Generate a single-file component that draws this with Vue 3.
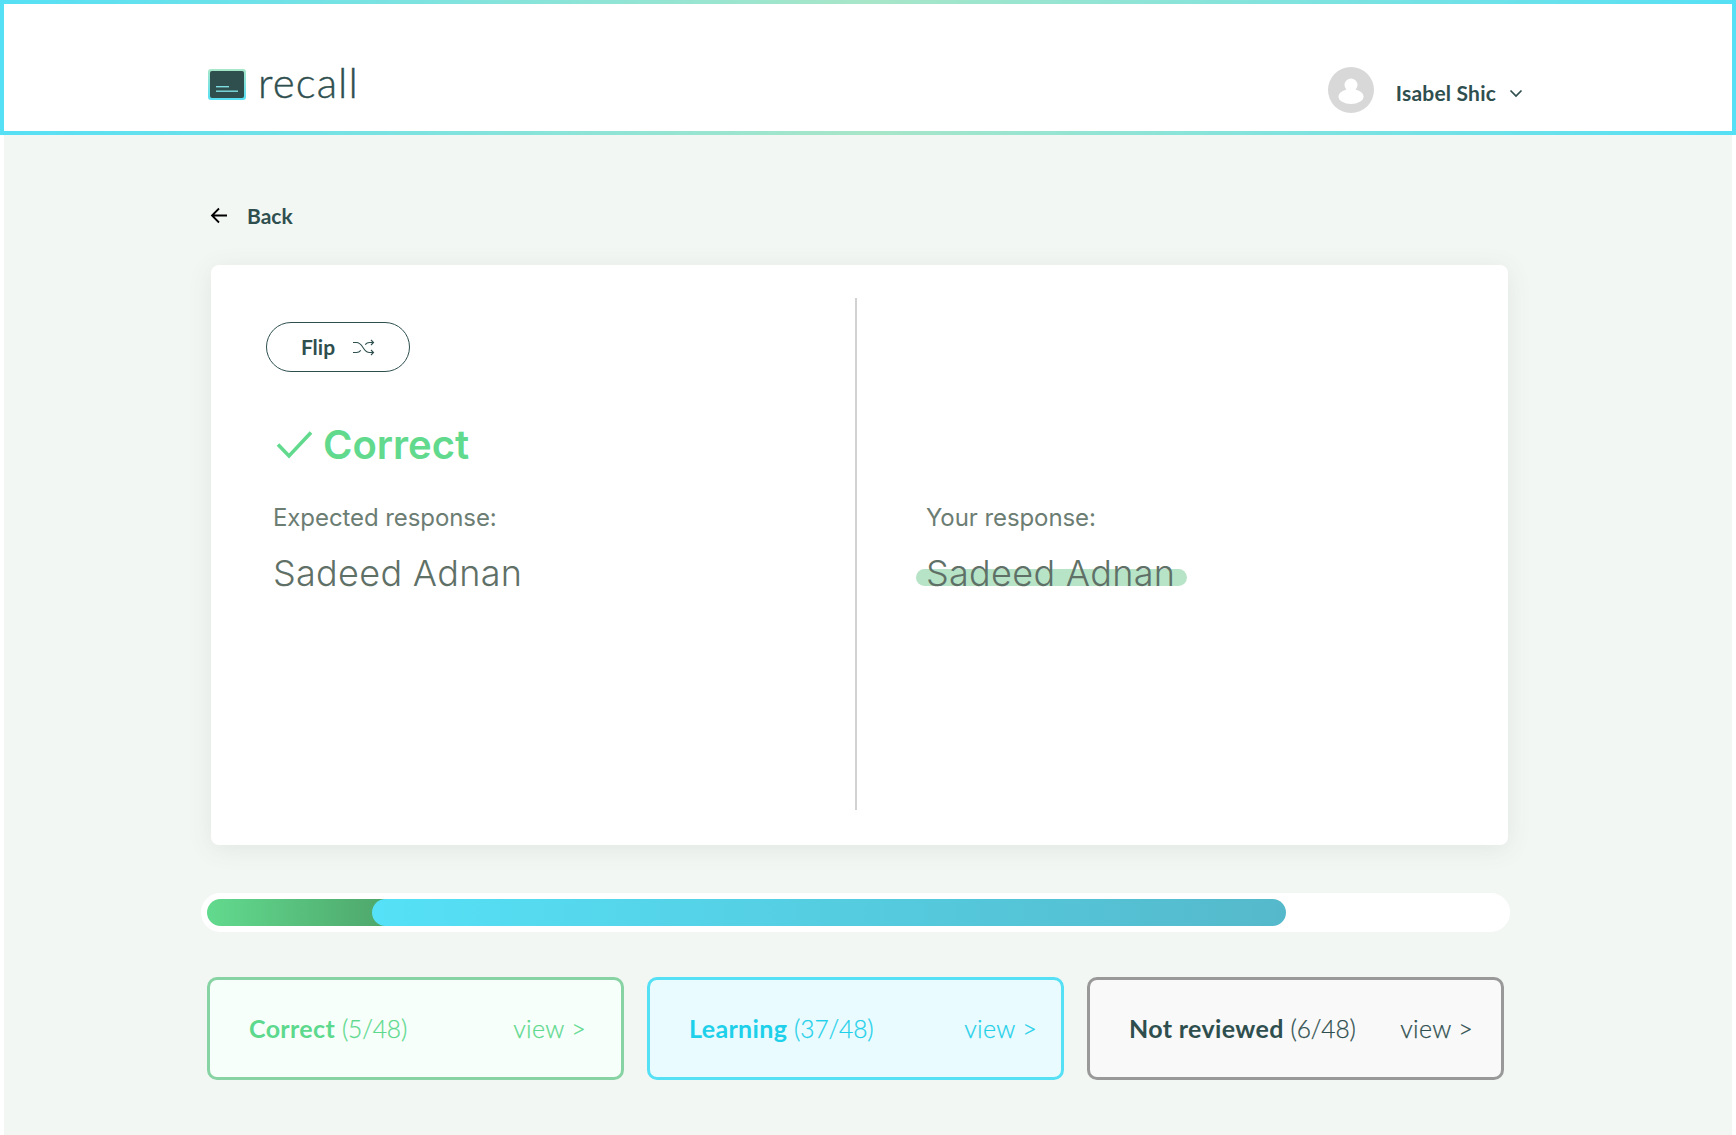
<script setup>
const stats = [
  { key: 'correct', label: 'Correct', count: '(5/48)' },
  { key: 'learning', label: 'Learning', count: '(37/48)' },
  { key: 'none', label: 'Not reviewed', count: '(6/48)' },
]
</script>

<template>
  <div class="page">
    <header class="header">
      <div class="brand">
        <svg class="logo" width="38" height="31" viewBox="0 0 38 31">
          <defs>
            <linearGradient id="lg" x1="0" y1="0" x2="0" y2="1">
              <stop offset="0" stop-color="#a8e6c8" />
              <stop offset="1" stop-color="#56e0f5" />
            </linearGradient>
          </defs>
          <rect x="0" y="0" width="38" height="31" rx="3" fill="url(#lg)" />
          <rect x="2" y="2" width="34" height="27" rx="2" fill="#2f4f4f" />
          <rect x="8" y="17" width="13" height="1.4" fill="#7fdde0" />
          <rect x="8" y="21.5" width="22" height="1.4" fill="#7fdde0" />
        </svg>
        <span class="brand-name">recall</span>
      </div>
      <div class="user">
        <svg class="avatar" width="46" height="46" viewBox="0 0 46 46">
          <circle cx="23" cy="23" r="23" fill="#d8d8d8" />
          <circle cx="23" cy="18" r="6.5" fill="#fff" />
          <ellipse cx="23" cy="29.5" rx="12.5" ry="7.5" fill="#fff" />
        </svg>
        <span class="user-name">Isabel Shic</span>
        <svg class="chev" width="14" height="9" viewBox="0 0 14 9">
          <path d="M1.500 1.500 7 7l5.500-5.500" fill="none" stroke="#2f4f4f" stroke-width="1.700" />
        </svg>
      </div>
    </header>

    <main class="main">
      <div class="back">
        <svg width="18" height="17" viewBox="0 0 18 17">
          <path d="M17 8.500H2M9 1.500 2 8.500l7 7" fill="none" stroke="#000" stroke-width="1.800" />
        </svg>
        <span>Back</span>
      </div>

      <section class="card">
        <div class="col col-left">
          <button class="flip">
            <span>Flip</span>
            <svg width="23" height="17" viewBox="0 0 23 17">
              <path d="M1 3.500h3.500c3.500 0 4.500 2 6.500 5s3 5 6.500 5H21M1 13.500h3.500c2 0 3.200-.8 4.300-2.100M13.200 5.600c1.100-1.300 2.300-2.100 4.300-2.100H21M19 1l2.500 2.500L19 6M19 11l2.500 2.500L19 16" fill="none" stroke="#2f4f4f" stroke-width="1.100" />
            </svg>
          </button>
          <div class="status">
            <svg width="37" height="29" viewBox="0 0 37 29">
              <path d="M2 14.500 13 26 35 2.500" fill="none" stroke="#62da8e" stroke-width="3.600" />
            </svg>
            <span>Correct</span>
          </div>
          <div class="label">Expected response:</div>
          <div class="answer">Sadeed Adnan</div>
        </div>
        <div class="col col-right">
          <div class="label">Your response:</div>
          <div class="answer highlighted"><span class="mark"></span><span class="answer-text">Sadeed Adnan</span></div>
        </div>
      </section>

      <div class="track">
        <div class="bar-green"></div>
        <div class="bar-blue"></div>
      </div>

      <div class="stats">
        <div v-for="s in stats" :key="s.key" class="stat" :class="s.key">
          <span><b>{{ s.label }}</b> <span class="count">{{ s.count }}</span></span>
          <span class="view">view &gt;</span>
        </div>
      </div>
    </main>
  </div>
</template>

<style>
html, body { margin: 0; background: #fff; }
</style>

<style scoped>
.page {
  width: 1736px;
  height: 1135px;
  overflow: hidden;
  background: #fff;
  font-family: Lato, "Liberation Sans", sans-serif;
  color: #2f4f4f;
}
.header {
  box-sizing: border-box;
  height: 135px;
  border: 4px solid;
  border-image: linear-gradient(90deg, #56e0f5 0%, #a8e6c8 50%, #56e0f5 100%) 1;
  background: #fff;
  display: flex;
  justify-content: space-between;
  padding: 0 204px;
}
.brand { display: flex; align-items: center; margin-top: 28px; height: 100px; }
.logo { display: block; margin-top: 4px; }
.brand-name {
  margin-left: 12px;
  font-size: 42px;
  font-weight: 300;
  letter-spacing: 1.1px;
  -webkit-text-stroke: 0.4px #2f4f4f;
  color: #2f4f4f;
}
.user { display: flex; align-items: center; margin-top: 63px; height: 46px; margin-right: 5px; }
.user-name { margin-left: 22px; margin-top: 4px; font-size: 21px; font-weight: 700; letter-spacing: 0.2px; }
.chev { margin-left: 13px; margin-top: 7px; }

.main {
  margin: 0 4px;
  height: 1000px;
  background: #f3f7f4;
  padding: 68px 0 0 203px;
  box-sizing: border-box;
}
.back { display: flex; align-items: center; height: 24px; margin-left: 3px; font-size: 21px; font-weight: 700; }
.back span { margin-left: 19px; }

.card {
  box-sizing: border-box;
  width: 1297px;
  height: 580px;
  margin: 38px 0 0 4px;
  background: #fff;
  border-radius: 8px;
  box-shadow: 0 4px 24px rgba(60, 90, 75, 0.1);
  display: flex;
  padding: 33px 0;
}
.col { box-sizing: border-box; height: 512px; }
.col-left { width: 646px; border-right: 2px solid #d2d2d2; padding: 24px 0 0 55px; }
.col-right { padding: 205px 0 0 69px; }
.flip {
  box-sizing: border-box;
  width: 144px;
  height: 50px;
  border: 1px solid #2f4f4f;
  border-radius: 25px;
  background: #fff;
  color: #2f4f4f;
  font-family: inherit;
  font-size: 21px;
  font-weight: 700;
  display: flex;
  align-items: center;
  justify-content: center;
  gap: 17px;
  padding: 0 0 2px;
}
.flip svg { margin-top: 3px; }
.status {
  display: flex;
  align-items: center;
  gap: 10px;
  margin: 47px 0 0 10px;
  height: 50px;
  font-family: Inter, sans-serif;
  font-size: 40px;
  font-weight: 600;
  color: #62da8e;
}
.label {
  font-family: Inter, sans-serif;
  font-size: 24px;
  line-height: 30px;
  letter-spacing: -0.08px;
  color: #6c7d73;
  margin: 34px 0 0 7px;
}
.col-right .label { margin: 0; }
.answer {
  font-family: Inter, sans-serif;
  font-size: 36px;
  font-weight: 300;
  line-height: 44px;
  color: #5f7067;
  margin: 18px 0 0 7px;
  letter-spacing: 0.3px;
}
.highlighted { position: relative; margin-left: 0; }
.mark {
  position: absolute;
  left: -10px;
  top: 18px;
  width: 271px;
  height: 17px;
  border-radius: 9px;
  background: #b7e4c7;
}
.answer-text { position: relative; }

.track {
  box-sizing: border-box;
  width: 1309px;
  height: 39px;
  margin: 48px 0 0 -6px;
  padding: 6px;
  border-radius: 20px;
  background: #fff;
  display: flex;
}
.bar-green {
  width: 190px;
  height: 27px;
  border-radius: 14px 0 0 14px;
  background: linear-gradient(90deg, #62da8e 0%, #4fa96d 90%);
}
.bar-blue {
  width: 914px;
  height: 27px;
  margin-left: -25px;
  border-radius: 14px;
  background: linear-gradient(90deg, #55e1f7 0%, #55b9cb 100%);
}

.stats { display: flex; gap: 23px; margin-top: 45px; }
.stat {
  box-sizing: border-box;
  width: 417px;
  height: 103px;
  border: 3px solid;
  border-radius: 10px;
  display: flex;
  align-items: center;
  justify-content: space-between;
  padding-left: 39px;
  padding-bottom: 2px;
  font-size: 25px;
  font-weight: 300;
}
.stat b { font-weight: 700; letter-spacing: 0.35px; }
.count { font-size: 24.500px; letter-spacing: -0.1px; -webkit-text-stroke: 0.25px currentColor; }
.view { font-weight: 300; letter-spacing: 0.3px; -webkit-text-stroke: 0.25px currentColor; }
.correct { border-color: #87d3a3; background: #f7fffa; color: #5dd98e; padding-right: 35px; }
.learning { border-color: #56e0f5; background: #e9fbff; color: #1fd0ea; padding-right: 24px; }
.none { border-color: #999; background: #f9f9f9; color: #2f4f4f; padding-right: 28px; }
</style>
